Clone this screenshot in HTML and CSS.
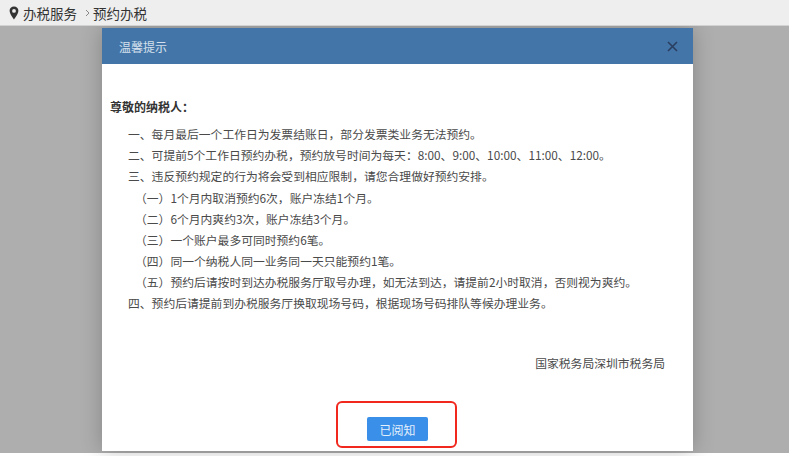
FILE: index.html
```html
<!DOCTYPE html>
<html lang="zh-CN">
<head>
<meta charset="utf-8">
<title>预约办税</title>
<link rel="stylesheet" href="styles.css">
</head>
<body>
<div class="page">
  <div class="crumbs">
    <svg class="pin" width="10" height="14" viewBox="0 0 10 14"><path fill-rule="evenodd" fill="#333" d="M5 .5C2.4.5.6 2.4.6 4.8.6 8 5 13.5 5 13.5S9.4 8 9.4 4.8C9.4 2.4 7.6.5 5 .5zM5 3a1.9 1.9 0 1 1 0 3.8A1.9 1.9 0 0 1 5 3z"/></svg>
    <span class="crumb">办税服务</span>
    <svg class="sep" width="5" height="8" viewBox="0 0 5 8"><path d="M1 1l3 3-3 3" stroke="#888" stroke-width="1" fill="none"/></svg>
    <span class="crumb">预约办税</span>
  </div>
  <div class="overlay">
    <div class="modal">
      <div class="modal-head">
        <span class="modal-title">温馨提示</span>
        <svg class="close" width="11" height="11" viewBox="0 0 11 11"><path d="M1 1l9 9M10 1l-9 9" stroke="#2a3f60" stroke-width="1.6" fill="none"/></svg>
      </div>
      <div class="modal-body">
        <p class="greet">尊敬的纳税人：</p>
        <ul class="rules">
          <li>一、每月最后一个工作日为发票结账日，部分发票类业务无法预约。</li>
          <li>二、可提前5个工作日预约办税，预约放号时间为每天：8:00、9:00、10:00、11:00、12:00。</li>
          <li>三、违反预约规定的行为将会受到相应限制，请您合理做好预约安排。</li>
          <li class="sub">（一）1个月内取消预约6次，账户冻结1个月。</li>
          <li class="sub">（二）6个月内爽约3次，账户冻结3个月。</li>
          <li class="sub">（三）一个账户最多可同时预约6笔。</li>
          <li class="sub">（四）同一个纳税人同一业务同一天只能预约1笔。</li>
          <li class="sub">（五）预约后请按时到达办税服务厅取号办理，如无法到达，请提前2小时取消，否则视为爽约。</li>
          <li>四、预约后请提前到办税服务厅换取现场号码，根据现场号码排队等候办理业务。</li>
        </ul>
        <p class="sign">国家税务局深圳市税务局</p>
        <div class="actions">
          <div class="mark">
            <button class="ok" type="button">已阅知</button>
          </div>
        </div>
      </div>
    </div>
  </div>
</div>
</body>
</html>
```

FILE: styles.css
```css
* { box-sizing: border-box; }
html, body { margin: 0; height: 100%; background: #fff; }
body {
  font-family: "Noto Sans CJK SC", "Liberation Sans", sans-serif;
  color: #4a4a4a;
  overflow: hidden;
}
.page {
  width: 789px;
  height: 453px;
  display: flex;
  flex-direction: column;
}
.crumbs {
  position: relative;
  z-index: 1;
  height: 26px;
  padding: 1px 0 0 9px;
  background: #eeeeee;
  border-bottom: 1px solid #d2d2d2;
  display: flex;
  align-items: center;
  font-size: 13.5px;
  color: #333;
  flex: none;
}
.pin { margin-right: 4px; }
.sep { margin: 0 3px 0 8px; }
.overlay {
  flex: 1;
  background: #aeaeae;
  padding: 2px 96px 2px 102px;
  display: flex;
  min-height: 0;
}
.modal {
  flex: 1;
  background: #fff;
  box-shadow: 0 0 20px rgba(0, 0, 0, .24);
  display: flex;
  flex-direction: column;
}
.modal-head {
  height: 36px;
  flex: none;
  background: #4375a8;
  padding: 0 15px 0 17px;
  display: flex;
  align-items: center;
  justify-content: space-between;
}
.modal-title { color: #d4e0ec; font-size: 12px; }
.modal-body {
  flex: 1;
  padding: 32px 28px 3px 8px;
  display: flex;
  flex-direction: column;
  font-size: 11.8px;
  line-height: 21.15px;
}
.greet { margin: 0 0 6px; font-weight: 700; font-size: 12px; color: #333; }
.rules { margin: 0; padding: 0 0 0 18px; list-style: none; }
.rules li { white-space: nowrap; }
.rules .sub { padding-left: 7px; }
.sign { margin: 38px 0 0; text-align: right; font-size: 11.8px; }
.actions { margin-top: auto; display: flex; justify-content: center; padding-left: 18px; }
.mark {
  width: 121px;
  height: 47px;
  border: 2.5px solid #f0281e;
  border-radius: 6px;
  display: flex;
  align-items: flex-end;
  justify-content: center;
  padding: 0 0 5px 2px;
}
.ok {
  width: 61px;
  height: 24px;
  border: 0;
  border-radius: 2px;
  background: #3a8fe8;
  color: #e4f0fc;
  font: 12px "Noto Sans CJK SC", sans-serif;
  padding: 0;
}
```
